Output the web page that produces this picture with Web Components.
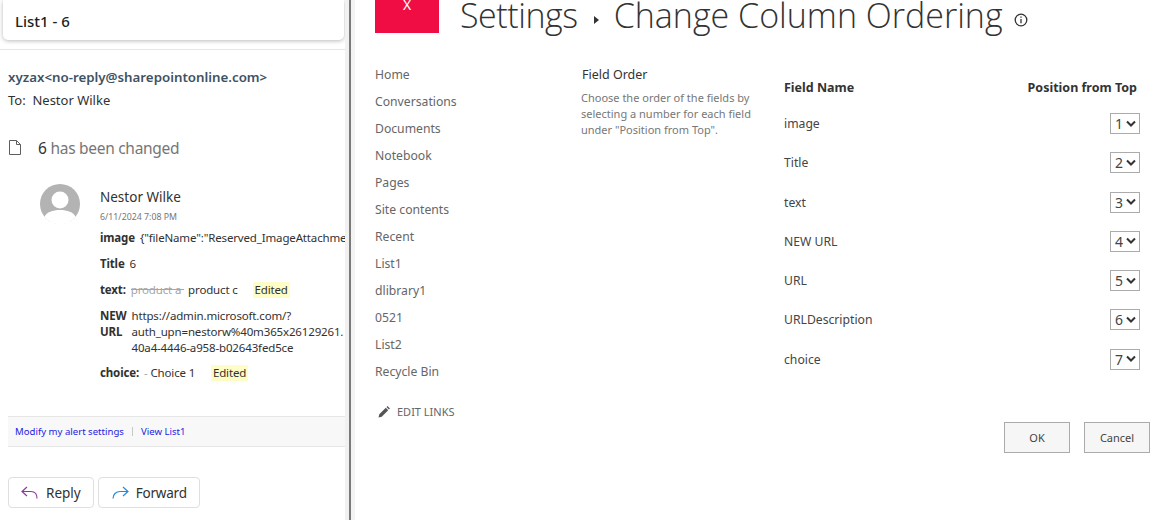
<!DOCTYPE html>
<html>
<head>
<meta charset="utf-8">
<title>Change Column Ordering</title>
<style>
html,body{margin:0;padding:0;height:100%;overflow:hidden;background:#fff;}
body{font-family:"Noto Sans","Open Sans","Liberation Sans",sans-serif;}
</style>
</head>
<body>
<split-page>
  <mail-pane slot="left"></mail-pane>
  <settings-page slot="right"></settings-page>
</split-page>

<script>
(()=>{
    // 页面外框：左边邮件 右边设置页
    class SplitPage extends HTMLElement {
        constructor(){
            super();
            this.attachShadow({mode:'open'}).innerHTML = `
            <style>
                :host{display:flex;width:1167px;height:520px;overflow:hidden;}
                .left{width:345px;flex:none;overflow:hidden;}
                .edge{width:4px;flex:none;background:#f1f1f1;}
                .bar{width:2px;flex:none;background:#7a7a7a;}
                .gap{width:4px;flex:none;background:#f3f3f3;}
                .right{flex:1;min-width:0;}
            </style>
            <div class="left"><slot name="left"></slot></div>
            <div class="edge"></div>
            <div class="bar"></div>
            <div class="gap"></div>
            <div class="right"><slot name="right"></slot></div>`;
        }
    }

    // 改动的字段行
    class ChangeRow extends HTMLElement {
        constructor(){
            super();
            this.attachShadow({mode:'open'}).innerHTML = `
            <style>
                :host{display:flex;gap:5px;font-size:11.5px;letter-spacing:-.15px;line-height:16px;color:#323130;white-space:nowrap;}
                .k{font-weight:700;flex:none;}
                .v{flex:1;min-width:0;overflow:hidden;}
            </style>
            <div class="k"><slot name="k"></slot></div>
            <div class="v"><slot></slot></div>`;
        }
    }
    customElements.define('change-row',ChangeRow);

    // 邮件面板
    class MailPane extends HTMLElement {
        constructor(){
            super();
            this.attachShadow({mode:'open'}).innerHTML = `
            <style>
                :host{display:block;height:520px;position:relative;color:#323130;}
                .subject{height:40px;margin:0 1px 0 3px;border-radius:0 0 5px 5px;background:#fff;box-shadow:0 1px 4px rgba(0,0,0,.28);
                    box-sizing:border-box;padding:11px 0 0 12px;font-size:15px;line-height:20px;font-weight:500;color:#201f1e;}
                .body{margin-top:9px;border-top:1px solid #e6e6e6;padding:18px 0 0 8px;}
                .from{font-size:13.3px;line-height:18px;font-weight:600;color:#3e5266;white-space:nowrap;}
                .to{font-size:13px;line-height:18px;margin-top:5px;}
                .changed{display:flex;align-items:center;margin-top:27px;height:24px;font-size:15.5px;letter-spacing:-.3px;color:#767676;margin-left:1px;}
                .changed svg{margin:-2px 17px 0 0;flex:none;}
                .changed b{font-weight:400;color:#323130;margin-right:4px;}
                .detail{display:flex;margin:24px 0 0 32px;gap:20px;}
                .avatar{width:40px;height:40px;flex:none;}
                .info{flex:1;min-width:0;overflow:hidden;}
                .name{font-size:13.5px;line-height:20px;margin-top:3px;}
                .date{font-size:8.8px;line-height:14px;color:#767676;margin:3px 0 6px;}
                .strike{color:#a6a6a6;text-decoration:line-through;margin-right:4px;}
                .dash{color:#a6a6a6;}
                .edited{background:#fffdc6;padding:2px 2px;margin-left:12px;}
                .rows change-row{margin-bottom:10px;}
                .rows change-row.tall{margin-bottom:9px;}
                .foot{display:flex;align-items:center;height:29px;margin:25px 0 0 0;background:#f8f8f8;border-top:1px solid #e6e6e6;border-bottom:1px solid #e6e6e6;
                    padding-left:7px;font-size:9.6px;color:#2222e0;}
                .foot i{width:1px;height:9px;background:#c8c8c8;margin:0 8px;display:block;}
                .actions{display:flex;gap:4px;margin-top:30px;}
                .btn{display:flex;align-items:center;height:31px;box-sizing:border-box;border:1px solid #e1dfdd;border-radius:4px;padding:0 12px;font-size:13.5px;color:#323130;gap:7px;background:#fff;}
            </style>
            <div class="subject">List1 - 6</div>
            <div class="body">
                <div class="from">xyzax&lt;no-reply@sharepointonline.com&gt;</div>
                <div class="to">To:&nbsp; Nestor Wilke</div>
                <div class="changed">
                    <svg width="12" height="15" viewBox="0 0 12 15" fill="none" stroke="#605e5c"><path d="M.5.5h7l4 4v10H.5zM7.500.5v4h4"/></svg>
                    <b>6</b> has been changed
                </div>
                <div class="detail">
                    <svg class="avatar" viewBox="0 0 40 40"><circle cx="20" cy="20" r="20" fill="#b3b3b3"/><circle cx="20" cy="16" r="8.500" fill="#fff"/><path d="M4.500 33c2-5 8-7 15.500-7s13.500 2 15.500 7a20 20 0 0 1-31 0z" fill="#fff"/></svg>
                    <div class="info">
                        <div class="name">Nestor Wilke</div>
                        <div class="date">6/11/2024 7:08 PM</div>
                        <div class="rows">
                            <change-row><span slot="k">image</span>{"fileName":"Reserved_ImageAttachme</change-row>
                            <change-row><span slot="k">Title</span>6</change-row>
                            <change-row><span slot="k">text:</span><span class="strike">product a </span> product c <span class="edited">Edited</span></change-row>
                            <change-row class="tall"><span slot="k">NEW<br>URL</span>https://admin.microsoft.com/?<br>auth_upn=nestorw%40m365x26129261.<br>40a4-4446-a958-b02643fed5ce</change-row>
                            <change-row><span slot="k">choice:</span><span class="dash">-</span> Choice 1 <span class="edited" style="margin-left:13px">Edited</span></change-row>
                        </div>
                    </div>
                </div>
                <div class="foot"><span>Modify my alert settings</span><i></i><span>View List1</span></div>
                <div class="actions">
                    <div class="btn"><svg width="18" height="14" viewBox="0 0 18 14" fill="none" stroke="#8e3a9d" stroke-width="1.200"><path d="M6 1 1 5.500 6 10M1 5.500h9c4 0 6 3 6 7"/></svg>Reply</div>
                    <div class="btn" style="letter-spacing:-.2px"><svg width="18" height="14" viewBox="0 0 18 14" fill="none" stroke="#2b88d8" stroke-width="1.200"><path d="M12 1l5 4.500L12 10M17 5.500H9c-4 0-7 3-7 7"/></svg>Forward</div>
                </div>
            </div>`;
        }
    }
    customElements.define('mail-pane',MailPane);

    // 字段顺序的下拉
    class PosSelect extends HTMLElement {
        constructor(){
            super();
            this.attachShadow({mode:'open'}).innerHTML = `
            <style>
                :host{display:flex;align-items:center;justify-content:space-between;box-sizing:border-box;width:30px;height:21px;border:1px solid #ababab;padding:0 2px 0 4px;font-size:14px;color:#444;background:#fff;}
            </style>
            <slot></slot>
            <svg width="12" height="8" viewBox="0 0 12 8" fill="none" stroke="#333" stroke-width="2"><path d="M2 1.500l4 4 4-4"/></svg>`;
        }
    }
    customElements.define('pos-select',PosSelect);

    // 右边的设置页
    class SettingsPage extends HTMLElement {
        constructor(){
            super();
            const nav = ['Home','Conversations','Documents','Notebook','Pages','Site contents','Recent','List1','dlibrary1','0521','List2','Recycle Bin'];
            const fields = ['image','Title','text','NEW URL','URL','URLDescription','choice'];
            this.attachShadow({mode:'open'}).innerHTML = `
            <style>
                :host{display:block;height:520px;color:#444;}
                .head{display:flex;height:33px;padding-left:20px;}
                .logo{width:64px;height:33px;background:#ef0d43;color:#fff;font-size:14px;text-align:center;line-height:10px;flex:none;}
                h1{margin:0 0 0 21px;font-weight:300;font-size:34px;line-height:30px;color:#333;white-space:nowrap;font-family:"Open Sans","Noto Sans",sans-serif;display:flex;align-items:center;height:30px;}
                .st{letter-spacing:-.45px;}
                .sep{width:0;height:0;border:4px solid transparent;border-left:5px solid #333;border-right:0;margin:10px 15px 0 16px;}
                .info{margin:10px 0 0 11px;flex:none;}
                .main{display:flex;padding:33px 0 0 20px;}
                nav{width:207px;flex:none;font-size:12.2px;color:#666;}
                nav div{height:27px;line-height:17px;}
                .edit{display:flex;align-items:center;gap:7px;margin-top:8px;font-size:11px;padding-left:3px;}
                .desc{width:202px;flex:none;}
                .desc .t{font-size:12.5px;line-height:17px;color:#333;}
                .desc p{margin:7px 0 0 -1px;font-size:11px;line-height:16px;color:#777;white-space:nowrap;}
                .table{width:354px;flex:none;font-size:12.2px;color:#444;}
                .th{display:flex;justify-content:space-between;font-weight:700;font-size:12.5px;color:#333;line-height:18px;padding:13px 1px 0 0;margin-bottom:16px;}
                .tr{display:flex;justify-content:space-between;align-items:center;height:21px;margin-bottom:18.300px;}
                .tr pos-select{margin-right:-2px;}
                .btns{display:flex;justify-content:flex-end;gap:14px;margin:52px -12px 0 0;}
                .b{width:66px;height:31px;box-sizing:border-box;border:1px solid #ababab;background:#f6f6f6;font-size:11px;line-height:30px;text-align:center;color:#444;}
            </style>
            <div class="head">
                <div class="logo">X</div>
                <h1><span class="st">Settings</span><span class="sep"></span>Change Column Ordering
                    <svg class="info" width="14" height="14" viewBox="0 0 14 14" fill="none" stroke="#333" stroke-width="1.300"><circle cx="7" cy="7" r="5.800"/><path d="M7 6v4.200M7 3.500v1.300"/></svg>
                </h1>
            </div>
            <div class="main">
                <nav>
                    ${nav.map(n=>`<div>${n}</div>`).join('')}
                    <div class="edit"><svg width="12" height="12" viewBox="0 0 12 12" fill="#555"><path d="M0.500 11.500l.8-3.200 6.500-6.500 2.400 2.400-6.500 6.500zM8.500 1.100l1-1 2.400 2.400-1 1z"/></svg>EDIT LINKS</div>
                </nav>
                <div class="desc">
                    <div class="t">Field Order</div>
                    <p>Choose the order of the fields by<br>selecting a number for each field<br>under "Position from Top".</p>
                </div>
                <div class="table">
                    <div class="th"><span>Field Name</span><span>Position from Top</span></div>
                    ${fields.map((f,i)=>`<div class="tr"><span>${f}</span><pos-select>${i+1}</pos-select></div>`).join('')}
                    <div class="btns"><div class="b">OK</div><div class="b">Cancel</div></div>
                </div>
            </div>`;
        }
    }
    customElements.define('settings-page',SettingsPage);
    customElements.define('split-page',SplitPage);
})();
</script>
</body>
</html>
